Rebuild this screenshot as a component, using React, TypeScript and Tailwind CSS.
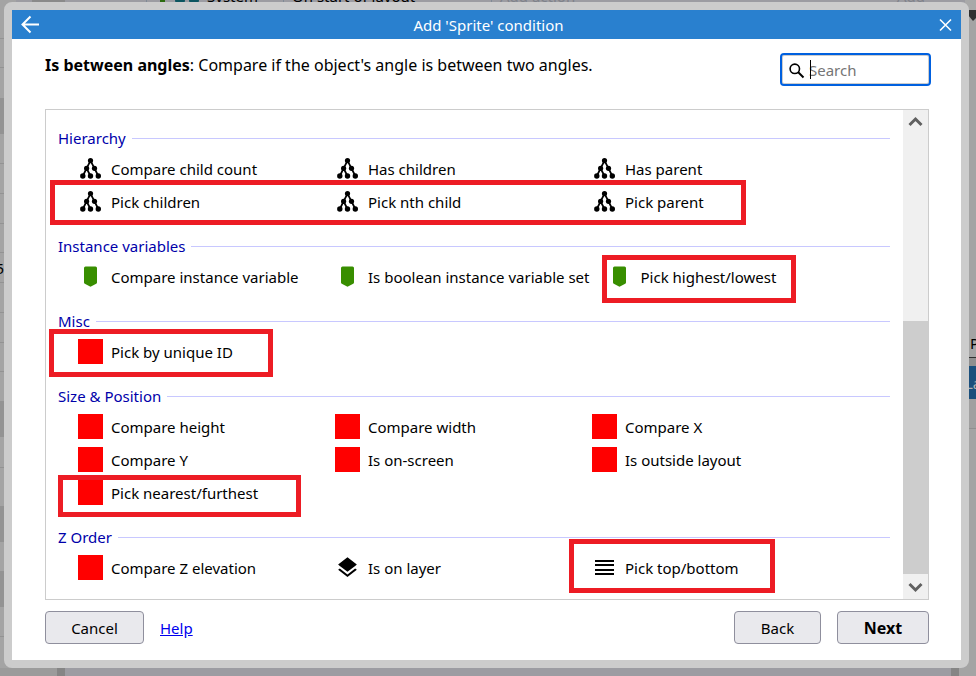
import { useState } from 'react';

type IconName = 'tree' | 'tag' | 'sprite' | 'layers' | 'lines';
type Item = { label: string; icon: IconName };

const sections: { title: string; items: Item[] }[] = [
  {
    title: 'Hierarchy',
    items: [
      { label: 'Compare child count', icon: 'tree' },
      { label: 'Has children', icon: 'tree' },
      { label: 'Has parent', icon: 'tree' },
      { label: 'Pick children', icon: 'tree' },
      { label: 'Pick nth child', icon: 'tree' },
      { label: 'Pick parent', icon: 'tree' },
    ],
  },
  {
    title: 'Instance variables',
    items: [
      { label: 'Compare instance variable', icon: 'tag' },
      { label: 'Is boolean instance variable set', icon: 'tag' },
      { label: 'Pick highest/lowest', icon: 'tag' },
    ],
  },
  {
    title: 'Misc',
    items: [{ label: 'Pick by unique ID', icon: 'sprite' }],
  },
  {
    title: 'Size & Position',
    items: [
      { label: 'Compare height', icon: 'sprite' },
      { label: 'Compare width', icon: 'sprite' },
      { label: 'Compare X', icon: 'sprite' },
      { label: 'Compare Y', icon: 'sprite' },
      { label: 'Is on-screen', icon: 'sprite' },
      { label: 'Is outside layout', icon: 'sprite' },
      { label: 'Pick nearest/furthest', icon: 'sprite' },
    ],
  },
  {
    title: 'Z Order',
    items: [
      { label: 'Compare Z elevation', icon: 'sprite' },
      { label: 'Is on layer', icon: 'layers' },
      { label: 'Pick top/bottom', icon: 'lines' },
    ],
  },
];

// red outlines drawn over the list
const highlights = [
  'left-1 top-[70px] w-[696px] h-[45px]',
  'left-[556px] top-[145px] w-[194px] h-12',
  'left-[3px] top-[219px] w-[224px] h-12',
  'left-3 top-[365px] w-[243px] h-[42px]',
  'left-[523px] top-[429px] w-[206px] h-[54px]',
];

function Icon({ name }: { name: IconName }) {
  if (name === 'sprite') {
    return <span className="w-[25px] h-[25px] shrink-0 bg-[#ff0000]" />;
  }
  return (
    <svg viewBox="0 0 25 25" className="w-[25px] h-[25px] shrink-0" aria-hidden="true">
      {name === 'tree' && (
        <>
          <path
            d="M4.8 20L8.6 12.3 12.5 4.6 16.5 12.3 20.3 20M8.6 12.3L12.5 20"
            fill="none"
            stroke="#000"
            strokeWidth="1.8"
          />
          <circle cx="12.5" cy="4.6" r="2.6" />
          <circle cx="8.6" cy="12.3" r="2.6" />
          <circle cx="16.5" cy="12.3" r="2.6" />
          <circle cx="4.8" cy="20" r="2.7" />
          <circle cx="12.5" cy="20" r="2.7" />
          <circle cx="20.3" cy="20" r="2.7" />
        </>
      )}
      {name === 'tag' && (
        <path
          d="M7.5 2.5h10A1.5 1.5 0 0 1 19 4v14.5c0 .6-.3 1-.8 1.3l-5.7 2.9-5.7-2.9c-.5-.3-.8-.7-.8-1.3V4a1.5 1.5 0 0 1 1.5-1.5z"
          fill="#388e00"
        />
      )}
      {name === 'layers' && (
        <path
          transform="translate(0 .2) scale(1.04)"
          d="M11.99 18.54l-7.37-5.73L3 14.07l9 7 9-7-1.63-1.27-7.38 5.74zM12 16l7.36-5.73L21 9l-9-7-9 7 1.63 1.27L12 16z"
        />
      )}
      {name === 'lines' && <path d="M3 5h19v2H3zM3 9h19v2H3zM3 14h19v2H3zM3 18h19v2H3z" />}
    </svg>
  );
}

// left gutter of the editor: row heights from top to bottom
const gutter = [
  'h-[38px]',
  'h-[30px] border-y',
  'h-[30px]',
  'h-9 bg-[#939393]',
  'h-[30px] border-b',
  'h-[30px] border-b',
  'h-[30px] border-b',
  'h-[29px] border-b',
  'h-[30px] border-b',
  'h-[30px] border-b',
  'h-[30px] border-b',
  'h-[29px] border-b',
  'h-[29px]',
  'h-9 bg-[#939393]',
  'h-[31px] border-b',
  'h-[38px]',
  'h-9 bg-[#939393]',
  'h-[29px]',
  'h-9 bg-[#939393]',
  'h-[30px] border-b',
];

// the editor window that shows round the dialog's edges
function Backdrop() {
  return (
    <div
      className="absolute inset-0 flex flex-col justify-between overflow-hidden bg-[#9c9ca2]"
      aria-hidden="true"
    >
      <div className="flex items-end h-1 leading-4 whitespace-nowrap">
        <span className="w-8" />
        <span className="w-[33px] h-1 bg-[#8a8a8a]" />
        <span className="w-[82px] h-1 border-r border-[#7f8a96]" />
        <span className="w-[13px]" />
        <span className="w-[5px] h-1 bg-[#2c6b10]" />
        <span className="w-[10px]" />
        <span className="w-[10px] h-1 rounded-b bg-[#0b5560]" />
        <span className="ml-1 w-[10px] h-1 rounded-b bg-[#0b5560]" />
        <span className="ml-2 w-[76px]">System</span>
        <span className="w-[208px] border-l border-[#7f8a96] pl-2">On start of layout</span>
        <span className="flex-1 border-l border-[#7f8a96] pl-2 text-[#7f828a]">Add action</span>
        <span className="w-[79px] text-[#7f828a]">Add</span>
      </div>

      <div className="flex justify-between flex-1 -mt-1">
        <div className="flex flex-col w-4 bg-[#a4a4a4]">
          {gutter.map((row, i) => (
            <div key={i} className={`flex items-center justify-start border-[#939393] ${row}`}>
              {i === 8 && <span className="w-1 flex justify-end">5</span>}
            </div>
          ))}
        </div>
        <div className="flex flex-col w-[11px] bg-[#a4a4a4]">
          <div className="h-[11px] border-b border-[#303030] bg-[#a9a9a9]" />
          <svg viewBox="0 0 8 10" className="self-end w-2 h-[10px]">
            <path d="M0 0h8v7L5 10 0 4z" fill="#303030" />
          </svg>
          <div className="flex items-end h-[337px] pb-1 pl-[5px] border-b border-[#303030]">P</div>
          <div className="h-2 bg-[#8f8f8f]" />
          <div className="flex items-center h-[33px] bg-[#1a4f7c] text-[#b0b0b0]">La</div>
          <div className="h-[30px] border-b border-[#8f8f8f] bg-[#a0a0a0]" />
        </div>
      </div>

      <div className="flex h-2">
        <span className="w-[57px] bg-[#9b9b9b]" />
        <span className="w-2 bg-[#858585]" />
        <span className="flex-1" />
        <span className="w-2 bg-[#858585]" />
        <span className="w-[17px] bg-[#a4a4a4]" />
      </div>
    </div>
  );
}

function Section({ title, items }: { title: string; items: Item[] }) {
  return (
    <section className="mb-[14px]">
      <div className="flex items-center gap-[6px] h-7">
        <h2 className="text-[#0000aa]">{title}</h2>
        <span className="flex-1 h-px bg-[#c8c8ff]" />
      </div>
      <ul className="flex flex-wrap pl-5">
        {items.map((item) => (
          <li key={item.label} className="min-w-[257px]">
            <button
              type="button"
              className="flex items-center gap-2 h-[33px] pr-[18px] whitespace-nowrap"
            >
              <Icon name={item.icon} />
              {item.label}
            </button>
          </li>
        ))}
      </ul>
    </section>
  );
}

function Scrollbar() {
  return (
    <div className="flex flex-col w-[25px] shrink-0 bg-[#f0f0f0]" aria-hidden="true">
      <svg viewBox="0 0 25 25" className="w-[25px] h-[25px]">
        <path d="M6.5 15L12.5 9l6 6" fill="none" stroke="#606060" strokeWidth="3" />
      </svg>
      <div className="flex-[186]" />
      <div className="flex-[253] bg-[#cdcdcd]" />
      <svg viewBox="0 0 25 25" className="w-[25px] h-[25px]">
        <path d="M6.5 10l6 6 6-6" fill="none" stroke="#606060" strokeWidth="3" />
      </svg>
    </div>
  );
}

const buttonClass =
  'h-[33px] rounded border border-[#8f8f9d] bg-[#e9e9ed] hover:bg-[#d0d0d7]';

export default function App() {
  const [search, setSearch] = useState('');

  return (
    <div className="relative flex min-h-screen pl-1 pr-[7px] pt-[2px] pb-2 text-[15px] leading-5 text-black font-['Noto_Sans',sans-serif]">
      <Backdrop />
      <main
        role="dialog"
        aria-labelledby="dialog-title"
        className="relative flex flex-col flex-1 border-8 border-[#cccccc] rounded-lg bg-[#cccccc]"
      >
        <header className="flex items-center justify-between h-[29px] px-2 bg-[#2980cf] text-white">
          <button type="button" aria-label="Back to list">
            <svg viewBox="0 0 20 20" className="w-5 h-5">
              <path
                d="M19 9.5H2.5M10.5 1.5L2.5 9.5l8 8"
                fill="none"
                stroke="currentColor"
                strokeWidth="2"
              />
            </svg>
          </button>
          <h1 id="dialog-title">Add 'Sprite' condition</h1>
          <button type="button" aria-label="Close">
            <svg viewBox="0 0 16 16" className="w-4 h-4">
              <path
                d="M3 2.5l11 11M14 2.5l-11 11"
                fill="none"
                stroke="currentColor"
                strokeWidth="1.6"
              />
            </svg>
          </button>
        </header>

        <div className="flex flex-col flex-1 px-8 pb-4 bg-white">
          <div className="flex items-start justify-between h-[70px] pl-px">
            <p className="pt-4 text-base leading-5">
              <b>Is between angles</b>: Compare if the object's angle is between two angles.
            </p>
            <div className="relative pt-4">
              <input
                type="text"
                aria-label="Search"
                placeholder="Search"
                value={search}
                onChange={(e) => setSearch(e.target.value)}
                className="block w-[147px] h-[29px] pl-[26px] border border-[#cccccc] rounded-xs bg-white outline-2 outline-[#0060df] placeholder:text-[#757575]"
              />
              <svg viewBox="0 0 16 16" className="absolute left-[7px] top-6 w-4 h-4" aria-hidden="true">
                <circle cx="5.8" cy="5.8" r="4.7" fill="none" stroke="#000" strokeWidth="1.6" />
                <path d="M9 9l5.5 5.5" stroke="#000" strokeWidth="1.9" />
              </svg>
              <span className="absolute left-7 top-[21px] w-px h-[19px] bg-black" />
            </div>
          </div>

          <div className="relative flex flex-1 ml-px border border-[#cccccc]">
            <div className="flex-1 pl-3 pr-[13px] pt-[14px]">
              {sections.map((section) => (
                <Section key={section.title} {...section} />
              ))}
            </div>
            <Scrollbar />
            {highlights.map((position) => (
              <div
                key={position}
                className={`absolute border-[5px] border-[#ed1c24] pointer-events-none ${position}`}
              />
            ))}
          </div>

          <footer className="flex items-center gap-4 mt-[11px] pl-px">
            <button type="button" className={`w-[99px] ${buttonClass}`}>
              Cancel
            </button>
            <a href="#help" className="text-[#0000ee] underline">
              Help
            </a>
            <button type="button" className={`w-[87px] ml-auto ${buttonClass}`}>
              Back
            </button>
            <button
              type="button"
              className={`w-[92px] text-base leading-5 font-bold ${buttonClass}`}
            >
              Next
            </button>
          </footer>
        </div>
      </main>
    </div>
  );
}
